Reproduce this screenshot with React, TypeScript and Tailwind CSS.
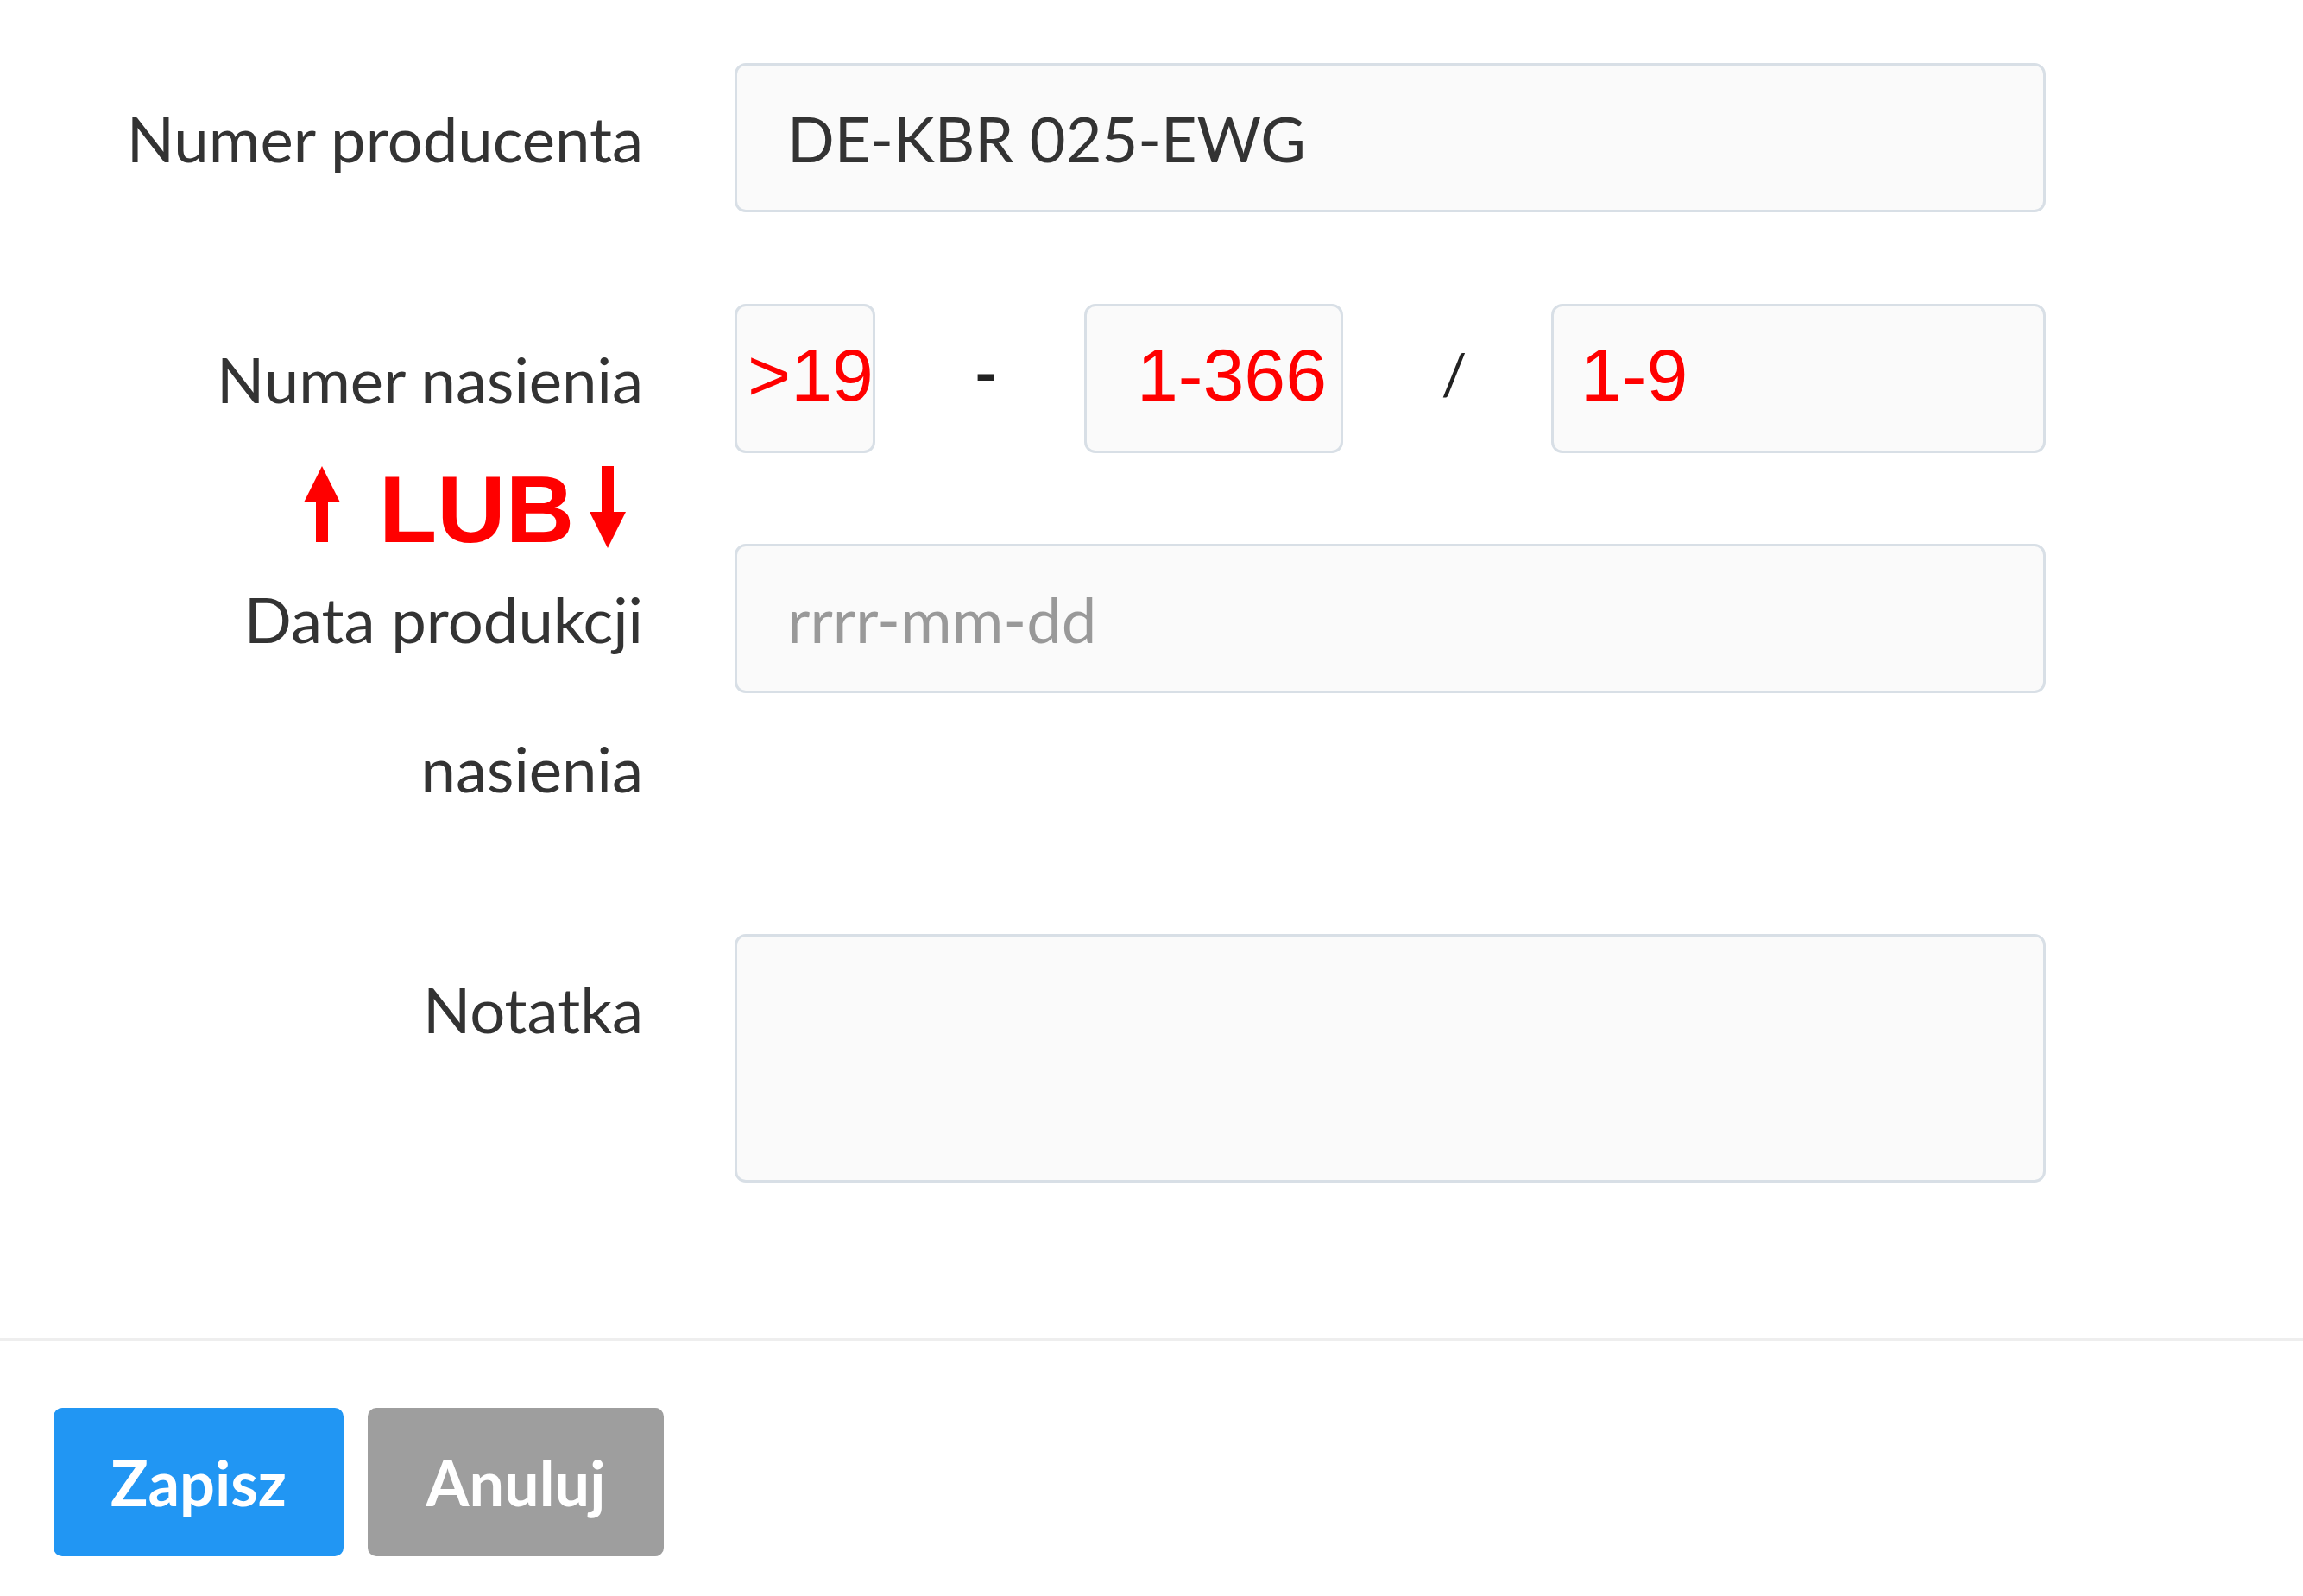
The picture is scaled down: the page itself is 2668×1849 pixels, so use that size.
import React from "react";

const labelCls =
  "w-[745px] shrink-0 text-right text-[72.5px] leading-[173px] text-[#333333]";
const boxCls =
  "h-[173px] rounded-[13px] border-[3px] border-[#d8dfe6] bg-[#fafafa]";

const redCls =
  "text-[86px] leading-[158px] text-[#ff0000] [font-family:'Liberation_Sans',Arial,sans-serif]";

const App: React.FC = () => {
  return (
    <div className="relative min-h-[1849px] w-[2668px] bg-white [font-family:Lato,'Open_Sans',sans-serif]">
      <div className="pt-[73px]">
        {/* Numer producenta */}
        <div className="flex gap-x-[106px]">
          <label className={labelCls}>Numer producenta</label>
          <input
            readOnly
            value="DE-KBR 025-EWG"
            className={`${boxCls} w-[1519px] px-[58px] text-[72px] text-[#333333] outline-none`}
          />
        </div>

        {/* Numer nasienia */}
        <div className="mt-[106px] flex gap-x-[106px]">
          <label className={labelCls}>Numer nasienia</label>
          <div className="flex w-[1519px] items-start">
            <div className={`${boxCls} w-[163px] pl-[12px]`}>
              <span className={`${redCls} text-[85px]`}>&gt;19</span>
            </div>
            <div className="w-[242px] pl-[14px] text-center text-[72px] font-bold leading-[158px] text-[#222222]">-</div>
            <div className={`${boxCls} w-[300px] pl-[58px]`}>
              <span className={`${redCls} text-[82px]`}>1-366</span>
            </div>
            <div className="w-[241px] pl-[16px] text-center text-[66px] leading-[160px] text-[#222222]">/</div>
            <div className={`${boxCls} flex-1 pl-[31px]`}>
              <span className={`${redCls} text-[84px]`}>1-9</span>
            </div>
          </div>
        </div>

        {/* Data produkcji nasienia */}
        <div className="mt-[105px] flex items-start gap-x-[106px]">
          <label className={labelCls}>
            Data produkcji
            <br />
            nasienia
          </label>
          <input
            type="text"
            placeholder="rrrr-mm-dd"
            className={`${boxCls} w-[1519px] px-[58px] text-[72.5px] text-[#333333] outline-none placeholder:text-[#999999]`}
          />
        </div>

        {/* Notatka */}
        <div className="mt-[106px] flex items-start gap-x-[106px]">
          <label className={labelCls}>Notatka</label>
          <textarea
            readOnly
            className="h-[288px] w-[1519px] resize-none rounded-[13px] border-[3px] border-[#d8dfe6] bg-[#fafafa] outline-none"
          />
        </div>
      </div>

      <div className="mt-[180px] h-[3px] w-full bg-[#eeeeee]" />

      <div className="flex gap-x-[28px] pl-[62px] pt-[78px]">
        <button className="h-[172px] w-[336px] rounded-[10px] bg-[#2196f3] text-[72px] font-bold text-white">
          Zapisz
        </button>
        <button className="h-[172px] w-[343px] rounded-[10px] bg-[#9e9e9e] text-[72px] font-bold text-white">
          Anuluj
        </button>
      </div>

      {/* LUB annotation */}
      <div className="absolute left-[352px] top-[540px] flex items-start">
        <svg width="42" height="88" viewBox="0 0 42 88">
          <polygon points="21,0 42,42 28,42 28,88 14,88 14,42 0,42" fill="#ff0000" />
        </svg>
        <span className="-mt-[5px] ml-[45px] text-[110px] font-bold leading-none text-[#ff0000] [font-family:'Liberation_Sans',Arial,sans-serif]">
          LUB
        </span>
        <svg width="42" height="95" viewBox="0 0 42 95" className="ml-[18px]">
          <polygon points="14,0 28,0 28,53 42,53 21,95 0,53 14,53" fill="#ff0000" />
        </svg>
      </div>
    </div>
  );
};

export default App;
